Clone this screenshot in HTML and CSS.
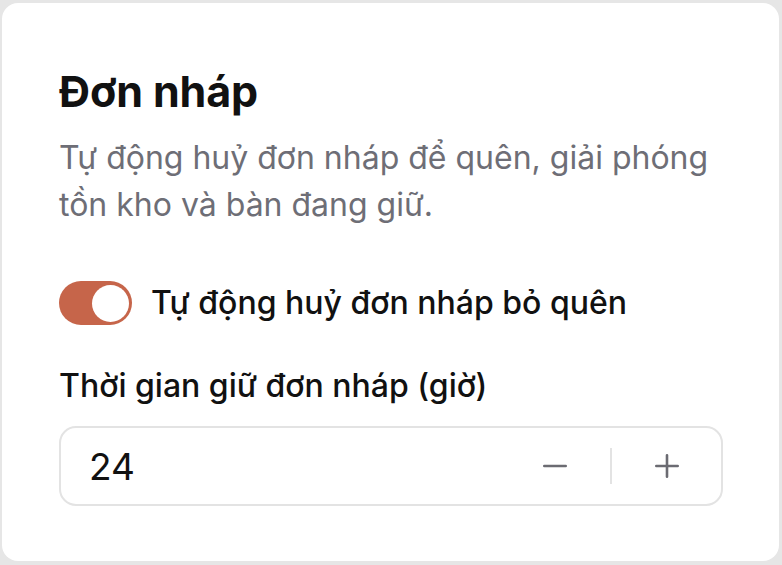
FILE: index.html
```html
<!DOCTYPE html>
<html lang="vi">
<head>
<meta charset="utf-8">
<link rel="stylesheet" href="styles.css">
</head>
<body>
<div class="card">
  <h1 class="title">Đơn nháp</h1>
  <p class="desc">Tự động huỷ đơn nháp để quên, giải phóng tồn kho và bàn đang giữ.</p>
  <label class="toggle-row">
    <span class="switch"><span class="knob"></span></span>
    <span class="toggle-label">Tự động huỷ đơn nháp bỏ quên</span>
  </label>
  <div class="field-label">Thời gian giữ đơn nháp (giờ)</div>
  <div class="stepper">
    <span class="value">24</span>
    <span class="btns">
      <span class="btn">
        <svg width="24" height="24" viewBox="0 0 24 24"><path d="M1.3 12H22.7" stroke="#6b6b72" stroke-width="2.6" stroke-linecap="round"/></svg>
      </span>
      <span class="divider"></span>
      <span class="btn">
        <svg width="24" height="24" viewBox="0 0 24 24"><path d="M1.3 12H22.7M12 1.3V22.7" stroke="#6b6b72" stroke-width="2.6" stroke-linecap="round"/></svg>
      </span>
    </span>
  </div>
</div>
</body>
</html>
```
FILE: styles.css
```css
html, body {
  margin: 0;
  padding: 0;
}
body {
  background: #e6e6e6;
  width: 782px;
  height: 565px;
  padding: 3px 3px 4px 2px;
  box-sizing: border-box;
  font-family: Inter, "Noto Sans", sans-serif;
}
.card {
  background: #ffffff;
  border-radius: 16px;
  height: 100%;
  box-sizing: border-box;
  padding: 63px 56px 0 57px;
}
.title {
  margin: 0;
  font-size: 43px;
  font-weight: 700;
  line-height: 50px;
  color: #111111;
  letter-spacing: -0.1px;
}
.desc {
  margin: 18px 0 0 0;
  font-size: 32px;
  line-height: 47px;
  color: #6e6e76;
  font-weight: 400;
}
.toggle-row {
  display: flex;
  align-items: center;
  gap: 19px;
  margin-top: 53px;
}
.switch {
  width: 73px;
  height: 44px;
  border-radius: 22px;
  background: #c6654a;
  display: flex;
  align-items: center;
  justify-content: flex-end;
  padding: 0 3px;
  box-sizing: border-box;
}
.knob {
  width: 37px;
  height: 37px;
  border-radius: 50%;
  background: #ffffff;
}
.toggle-label {
  font-size: 32px;
  font-weight: 500;
  color: #111111;
  line-height: 44px;
}
.field-label {
  margin-top: 41px;
  font-size: 32px;
  font-weight: 500;
  color: #111111;
  line-height: 40px;
}
.stepper {
  margin-top: 20px;
  height: 80px;
  border: 2px solid #e3e3e3;
  border-radius: 17px;
  box-sizing: border-box;
  display: flex;
  align-items: center;
  justify-content: space-between;
  padding: 0 42px 0 28px;
}
.value {
  font-size: 37px;
  color: #111111;
}
.btns {
  display: flex;
  align-items: center;
  gap: 43px;
}
.btn {
  display: flex;
  width: 24px;
  height: 24px;
}
.divider {
  width: 2px;
  height: 36px;
  background: #e3e3e3;
}
```
